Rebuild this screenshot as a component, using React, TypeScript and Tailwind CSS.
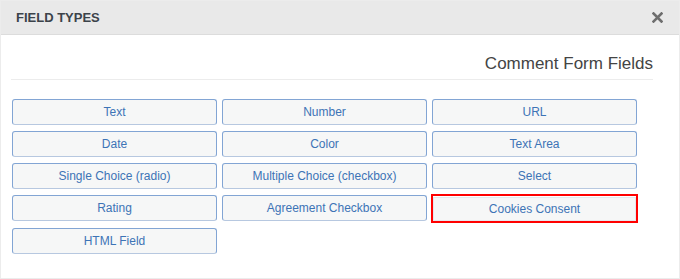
const fields = [
  "Text",
  "Number",
  "URL",
  "Date",
  "Color",
  "Text Area",
  "Single Choice (radio)",
  "Multiple Choice (checkbox)",
  "Select",
  "Rating",
  "Agreement Checkbox",
  "Cookies Consent",
  "HTML Field",
];

export default function App() {
  return (
    <div
      className="w-[680px] h-[279px] bg-white border border-[#ececec] overflow-hidden"
      style={{ fontFamily: '"Liberation Sans", Arial, sans-serif' }}
    >
      {/* Header */}
      <div className="h-[34px] bg-[#e9e9e9] border-b border-[#dcdcdc] flex items-center justify-between pl-[15px] pr-[16px]">
        <h1 className="text-[13px] font-bold text-[#3c434a]">FIELD TYPES</h1>
        <svg width="11" height="11" viewBox="0 0 11 11" className="text-[#6e6e6e]">
          <path d="M1.5 1.5 L9.5 9.5 M9.5 1.5 L1.5 9.5" stroke="currentColor" strokeWidth="2.6" strokeLinecap="square" />
        </svg>
      </div>

      {/* Body */}
      <div className="pl-[10px] pr-[26px]">
        <div className="mt-[18px] pb-[5px] border-b border-[#ececec] text-right text-[17px] leading-[21px] text-[#444]">
          Comment Form Fields
        </div>
        <div className="mt-[19px] ml-[1px] grid grid-cols-[205px_205px_205px] gap-x-[5px] gap-y-[6px]">
          {fields.map((name) =>
            name === "Cookies Consent" ? (
              <div key={name} className="-m-[1px] border-2 border-[#f00]">
                <button className="w-full h-[24px] bg-[#f6f7f7] border border-[#e4e8ee] text-[12px] text-[#3d74b6]">
                  {name}
                </button>
              </div>
            ) : (
              <button
                key={name}
                className="h-[26px] rounded-[3px] bg-[#f6f7f7] border border-[#82a5d4] border-b-[#b7c8e0] text-[12px] text-[#3d74b6]"
              >
                {name}
              </button>
            )
          )}
        </div>
      </div>
    </div>
  );
}
